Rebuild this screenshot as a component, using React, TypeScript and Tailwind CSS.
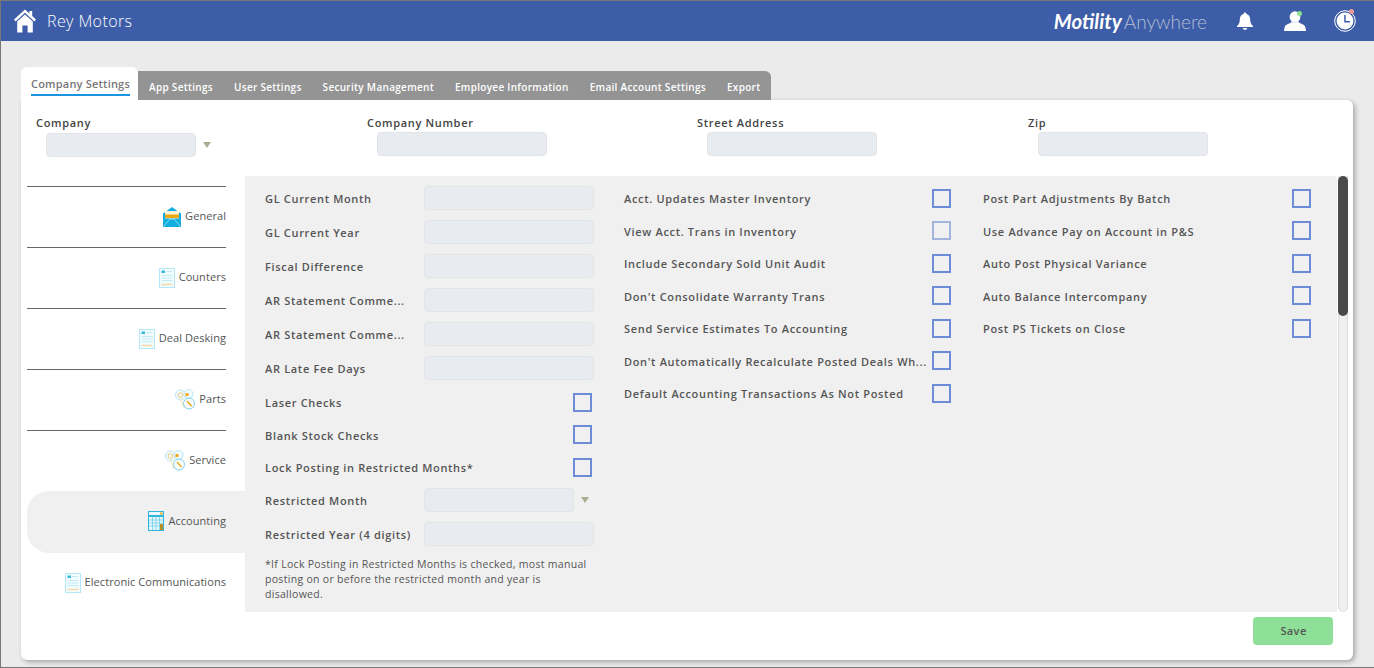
const font = "font-['Open_Sans',sans-serif]"

function HomeIcon() {
  return (
    <svg viewBox="0 0 22 24" className="w-[22px] h-[24px] text-white" fill="currentColor">
      <path d="M11 0.5 L0 10.6 L1.6 12.4 L11 3.8 L20.4 12.4 L22 10.6 L18.2 7.1 V2 H15.4 V4.6 Z" />
      <path d="M3.2 12.6 L11 5.6 L18.8 12.6 V23.5 H13.6 V16.6 H8.4 V23.5 H3.2 Z" />
    </svg>
  )
}

function BellIcon() {
  return (
    <svg viewBox="0 0 16 18" className="w-[16px] h-[18px]" fill="white">
      <path d="M8 0.5 C9 0.5 9.4 1.2 9.4 2 C12 2.7 13.2 4.8 13.2 7.6 C13.2 10.8 14 12.4 16 14 V15 H0 V14 C2 12.4 2.8 10.8 2.8 7.6 C2.8 4.8 4 2.7 6.6 2 C6.6 1.2 7 0.5 8 0.5 Z" />
      <path d="M5.8 16 H10.2 C10 17.2 9.1 18 8 18 C6.9 18 6 17.2 5.8 16 Z" />
    </svg>
  )
}

function UserIcon() {
  return (
    <svg viewBox="0 0 22 20" className="w-[22px] h-[20px]" fill="white">
      <ellipse cx="11" cy="6" rx="5.4" ry="5.8" />
      <path d="M7.6 10.6 C8.6 11.8 13.4 11.8 14.4 10.6 C15 12 17 12.6 19 13.4 C21 14.2 21.6 16 22 20 H0 C0.4 16 1 14.2 3 13.4 C5 12.6 7 12 7.6 10.6 Z" />
    </svg>
  )
}

function ClockIcon() {
  return (
    <svg viewBox="0 0 22 22" className="w-[22px] h-[22px]" fill="none">
      <circle cx="11" cy="11" r="10.3" stroke="white" strokeWidth="1" />
      <circle cx="11" cy="11" r="8.4" fill="white" />
      <path d="M11 5 V11.7 H16" stroke="#3d5da8" strokeWidth="1.5" />
    </svg>
  )
}

function EnvelopeIcon() {
  return (
    <svg viewBox="0 0 18 20" className="w-[18px] h-[20px]">
      <path d="M9 0 L18 6.5 V20 H0 V6.5 Z" fill="#12aee0" />
      <rect x="2" y="4" width="14" height="7.5" fill="#fdf2d8" />
      <rect x="2" y="7.5" width="14" height="3.5" fill="#e8a814" />
      <path d="M0 20 L7 12 H11 L18 20" fill="none" stroke="#a8e4f5" strokeWidth="0.8" />
    </svg>
  )
}

function DocIcon() {
  return (
    <svg viewBox="0 0 16 20" className="w-[16px] h-[20px]">
      <rect x="0.5" y="0.5" width="15" height="19" fill="#f2fbfe" stroke="#b5e8f6" />
      <rect x="2.5" y="2.5" width="3.5" height="2.5" fill="#38b6e0" />
      <path d="M7 3.5 H13 M2.5 7.5 H13.5 M2.5 10 H13.5 M2.5 12.5 H13.5" stroke="#c4eaf6" />
      <path d="M2.5 16.5 H13.5" stroke="#f4d9a4" strokeWidth="1.4" />
    </svg>
  )
}

function KeysIcon() {
  return (
    <svg viewBox="0 0 20 21" className="w-[20px] h-[21px]" fill="none">
      <circle cx="5.5" cy="6" r="5" fill="#f2fbfe" stroke="#b5e8f6" />
      <circle cx="13.5" cy="5" r="4.5" fill="#f2fbfe" stroke="#b5e8f6" />
      <circle cx="5.5" cy="6" r="2.4" stroke="#f2c878" />
      <rect x="10.5" y="4" width="3" height="3" fill="#f0a818" />
      <path d="M5.5 9 L8.5 18 H12" stroke="#f6e0b0" />
      <circle cx="14" cy="14.5" r="5.5" fill="#f8fdff" stroke="#7ed0ec" />
      <path d="M12 12 L16.5 17" stroke="#f0a818" strokeWidth="1.5" />
    </svg>
  )
}

function CalcIcon() {
  return (
    <svg viewBox="0 0 16 20" className="w-[16px] h-[20px]">
      <rect x="0.5" y="0.5" width="15" height="19" fill="#e8f8fd" stroke="#2fb4de" />
      <rect x="1" y="4" width="14" height="2" fill="#2fb4de" />
      <rect x="12" y="1.5" width="2.5" height="2" fill="#f0a818" />
      <path d="M1 9 H15 M1 12 H15 M1 15 H15 M4.5 6 V19 M8 6 V19 M11.5 6 V19" stroke="#6fcbe8" strokeWidth="0.8" />
      <rect x="12" y="13" width="3" height="6" fill="#b8901c" />
    </svg>
  )
}

function Arrow() {
  return <div className="w-0 h-0 border-l-[4px] border-r-[4px] border-t-[6px] border-l-transparent border-r-transparent border-t-[#a9ad8f]" />
}

function Input({ className = "w-[170px]" }: { className?: string }) {
  return <div className={`h-[24px] rounded-[4px] bg-[#e8ebf0] border border-[#e2e4e8] ${className}`} />
}

function Check({ muted }: { muted?: boolean }) {
  return <div className={`w-[19px] h-[19px] shrink-0 border-2 ${muted ? "border-[#a3b5dc]" : "border-[#6c8cd8]"}`} />
}

function Label({ children, low }: { children: string; low?: boolean }) {
  return <span className={`${low ? "pt-[4px]" : "pt-[2px]"} text-[11px] font-semibold tracking-[0.67px] text-[#555] whitespace-nowrap`}>{children}</span>
}

function CheckRow({ label, muted, w = "w-[327px]" }: { label: string; muted?: boolean; w?: string }) {
  return (
    <div className={`h-[32.5px] flex items-center justify-between ${w}`}>
      <Label>{label}</Label>
      <Check muted={muted} />
    </div>
  )
}

function InputRow({ label, select, low }: { label: string; select?: boolean; low?: boolean }) {
  return (
    <div className="h-[34px] flex items-center w-[329px]">
      <div className="w-[159px] flex"><Label low={low}>{label}</Label></div>
      {select ? (
        <div className="flex items-center gap-[7px]">
          <Input className="w-[150px]" />
          <Arrow />
        </div>
      ) : (
        <Input />
      )}
    </div>
  )
}

const tabs = ["App Settings", "User Settings", "Security Management", "Employee Information", "Email Account Settings", "Export"]

const sideItems = [
  { label: "General", icon: <EnvelopeIcon />, line: true },
  { label: "Counters", icon: <DocIcon />, line: true },
  { label: "Deal Desking", icon: <DocIcon />, line: true },
  { label: "Parts", icon: <KeysIcon />, line: true },
  { label: "Service", icon: <KeysIcon />, line: true },
  { label: "Accounting", icon: <CalcIcon />, active: true },
  { label: "Electronic Communications", icon: <DocIcon />, last: true },
]

const topFields = ["Company", "Company Number", "Street Address", "Zip"]
const col2 = [
  "Acct. Updates Master Inventory",
  "View Acct. Trans in Inventory",
  "Include Secondary Sold Unit Audit",
  "Don't Consolidate Warranty Trans",
  "Send Service Estimates To Accounting",
  "Don't Automatically Recalculate Posted Deals Wh...",
  "Default Accounting Transactions As Not Posted",
]
const col3 = [
  "Post Part Adjustments By Batch",
  "Use Advance Pay on Account in P&S",
  "Auto Post Physical Variance",
  "Auto Balance Intercompany",
  "Post PS Tickets on Close",
]

export default function App() {
  return (
    <div className={`${font} w-full h-[668px] overflow-hidden bg-[#ebebeb] border-t border-l border-b border-[#777] flex flex-col`}>
      {/* Top bar */}
      <div className="h-[40px] shrink-0 bg-[#3d5da8] flex items-center pl-[13px] pr-[18px]">
        <HomeIcon />
        <span className="ml-[11px] text-[16px] font-light text-white tracking-[0.4px]">Rey Motors</span>
        <div className="ml-auto flex items-baseline mr-[30px] font-['Lato',sans-serif]">
          <span className="text-[20.5px] font-bold italic text-white mr-[2px]">Motility</span>
          <span className="text-[19px] font-light text-[#b4bdd2]">Anywhere</span>
        </div>
        <BellIcon />
        <div className="relative ml-[31px]">
          <UserIcon />
          <div className="absolute top-0 right-[4px] w-[5px] h-[5px] rounded-full bg-[#8ee08e]" />
        </div>
        <div className="relative ml-[28px]">
          <ClockIcon />
          <div className="absolute top-[-1px] right-[2px] w-[5px] h-[5px] rounded-full bg-[#f09a9a]" />
        </div>
      </div>

      <div className="pl-[20px] pt-[26px]">
        {/* Tabs */}
        <div className="flex items-end h-[33px]">
          <div className="w-[117px] h-[33px] bg-white rounded-t-[6px] pl-[10px] pt-[9px]">
            <div className="w-fit border-b-2 border-[#1a94e0] pb-[2px] text-[11px] font-semibold tracking-[0.2px] leading-[16px] text-[#777] whitespace-nowrap">Company Settings</div>
          </div>
          <div className="h-[29px] bg-[#949494] rounded-tr-[6px] flex items-center pl-[11px] pr-[11px] pt-[4px] gap-[21px]">
            {tabs.map(t => (
              <span key={t} className="text-[10px] font-semibold tracking-[0.3px] text-white whitespace-nowrap">{t}</span>
            ))}
          </div>
        </div>

        {/* Card */}
        <div className="w-[1332px] h-[560px] bg-white rounded-b-[6px] rounded-tr-[6px] shadow-[2px_2px_5px_rgba(0,0,0,0.3)] flex flex-col">
          <div className="h-[76px] shrink-0 grid grid-cols-[331px_330px_331px_300px] pl-[15px] pt-[15px]">
            {topFields.map((f, i) => (
              <div key={f}>
                <div className="text-[11px] font-semibold tracking-[0.67px] text-[#444] leading-[16px] whitespace-nowrap">{f}</div>
                <div className={`ml-[10px] flex items-center gap-[7px] ${i === 0 ? "mt-[2px]" : "mt-[1px]"}`}>
                  <Input className={i === 0 ? "w-[150px]" : "w-[170px]"} />
                  {i === 0 && <Arrow />}
                </div>
              </div>
            ))}
          </div>

          <div className="h-[436px] shrink-0 flex">
            {/* Sidebar */}
            <div className="w-[224px] pl-[6px] pt-[10px] shrink-0 overflow-hidden">
              {sideItems.map(item => (
                <div
                  key={item.label}
                  className={`flex items-center justify-end gap-[4px] pr-[19px] text-[11px] tracking-[0.06px] text-[#555] whitespace-nowrap ${
                    item.active ? "bg-[#f0f0f0] rounded-l-[22px] h-[62px] pb-[2px]" : "h-[61px]"
                  } ${item.last ? "pb-[2px]" : ""} ${item.line ? "relative" : ""}`}
                >
                  {item.line && <div className="absolute top-0 left-0 right-[19px] h-px bg-[#666]" />}
                  {item.icon}
                  <span>{item.label}</span>
                </div>
              ))}
            </div>

            {/* Settings panel */}
            <div className="w-[1092px] shrink-0 bg-[#f0f0f0] rounded-tr-[4px] pl-[20px] grid grid-cols-[359px_359px_328px]">
              <div className="pt-[5px]">
                <InputRow label="GL Current Month" />
                <InputRow label="GL Current Year" />
                <InputRow label="Fiscal Difference" />
                <InputRow label="AR Statement Comme..." />
                <InputRow label="AR Statement Comme..." />
                <InputRow label="AR Late Fee Days" />
                <div className="mt-[1px] -mb-[1px]">
                  <CheckRow label="Laser Checks" />
                  <CheckRow label="Blank Stock Checks" />
                  <CheckRow label="Lock Posting in Restricted Months*" />
                </div>
                <InputRow label="Restricted Month" select low />
                <InputRow label="Restricted Year (4 digits)" low />
                <p className="mt-[6px] w-[329px] text-[10.5px] leading-[15px] tracking-[0.3px] text-[#555]">
                  *If Lock Posting in Restricted Months is checked, most manual posting on or before the restricted month and year is disallowed.
                </p>
              </div>
              <div className="pt-[6px]">
                {col2.map((l, i) => <CheckRow key={i} label={l} muted={i === 1} />)}
              </div>
              <div className="pt-[6px]">
                {col3.map(l => <CheckRow key={l} label={l} w="w-[328px]" />)}
              </div>
            </div>

            {/* Scrollbar */}
            <div className="ml-[1px] w-[10px] shrink-0 bg-[#f1f1f1] border-x border-[#e0e0e0] rounded-b-[5px] shadow-[inset_0_0_2px_rgba(0,0,0,0.1)]">
              <div className="h-[140px] -mx-px bg-[#4a4a4a] rounded-[5px]" />
            </div>
          </div>

          <div className="flex justify-end pt-[5px] pr-[20px]">
            <div className="w-[80px] h-[28px] pl-[1px] rounded-[4px] bg-[#8ee098] flex items-center justify-center text-[11px] font-semibold tracking-[0.4px] text-[#555]">Save</div>
          </div>
        </div>
      </div>
    </div>
  )
}
